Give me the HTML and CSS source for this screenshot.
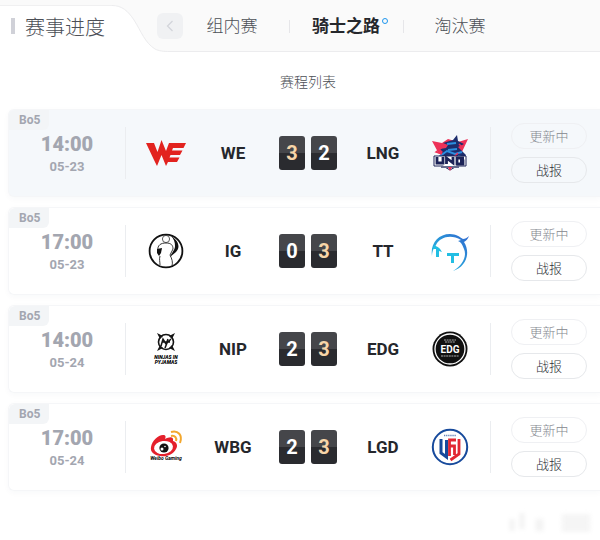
FILE: index.html
```html
<!DOCTYPE html>
<html lang="zh-CN">
<head>
    <meta charset="UTF-8">
    <meta name="viewport" content="width=device-width, initial-scale=1">
    <title>赛事进度</title>
    <link rel="stylesheet" href="styles.css">
</head>
<body>
    <header class="header">
        <h1 class="title">赛事进度</h1>
        <svg class="curve" viewBox="0 0 58 47" aria-hidden="true">
            <path d="M0 0.5C10 0.5 16 6 22 15C29 26 33 38 43 44C47 46 51 46.5 58 46.5V47H0Z" fill="#fff"/>
            <path d="M0 0.5C10 0.5 16 6 22 15C29 26 33 38 43 44C47 46 51 46.5 58 46.5" fill="none" stroke="#ececee"/>
        </svg>
        <button class="prev" type="button" aria-label="上一页">
            <svg width="8" height="12" viewBox="0 0 8 12"><path d="M6.5 1L1.5 6L6.5 11" fill="none" stroke="#d3d5da" stroke-width="1.3"/></svg>
        </button>
        <nav class="tabs">
            <a class="tab" href="#group">组内赛</a>
            <a class="tab active" href="#knight">骑士之路</a>
            <a class="tab" href="#knockout">淘汰赛</a>
        </nav>
    </header>

    <main>
        <h2 class="list-title">赛程列表</h2>

        <ul class="list">
            <li class="match current">
                <span class="bo">Bo5</span>
                <div class="date"><b>14:00</b><span>05-23</span></div>
                <div class="versus">
                    <!-- WE -->
                    <svg class="logo" viewBox="0 0 40 40">
                        <path fill="#e2231f" d="M0 10H8L11.500 19L15.500 7L20 18L23 10H40L37.500 15H27L26 17.500H36.500L34 22H24.500L23.500 24.500H33.500L31 29H22L20 33L15.500 22L11 33L8 27Z"/>
                    </svg>
                    <span class="team">WE</span>
                    <div class="score"><b class="win">3</b><b>2</b></div>
                    <span class="team">LNG</span>
                    <!-- LNG -->
                    <svg class="logo" viewBox="0 0 40 40">
                        <path fill="#ed3158" d="M2 8L12 10L18 6L28 9L38 6L31 21H9Z"/>
                        <path fill="#1d2d6c" d="M13 10L23 7L27 2L28 8L34 11L28 14L31 17L36 22L34 26H6L13 19L10 16L16 15L18 12Z"/>
                        <path fill="none" stroke="#2c8ee0" stroke-width="2" d="M17 11L26 10M18 17L27 16M10 23L17 18L25 21L32 19M28 23L34 25"/>
                        <path fill="none" stroke="#ed3158" stroke-width="1.5" d="M8 11L11 15L6 19L12 21M29 11L32 14M24 24L28 20"/>
                        <path fill="#fff" stroke="#1c2357" d="M4 23H36V33H27L20 37L13 33H4Z"/>
                        <path fill="none" stroke="#1c2357" stroke-width="2.8" d="M7 24V30H13V24M16.500 31V25L23 30V24M34 25H27V31H33V28H30"/>
                        <path d="M11 34H29" stroke="#656a8c" stroke-width="2"/>
                        <path d="M18 34L20 38L22 34Z" fill="#ed3158"/>
                    </svg>
                </div>
                <div class="actions"><button type="button" disabled>更新中</button><button type="button">战报</button></div>
            </li>

            <li class="match">
                <span class="bo">Bo5</span>
                <div class="date"><b>17:00</b><span>05-23</span></div>
                <div class="versus">
                    <!-- IG -->
                    <svg class="logo" viewBox="0 0 40 40">
                        <circle cx="20" cy="20" r="16.4" fill="#fff" stroke="#111" stroke-width="1.8"/>
                        <circle cx="20" cy="8" r="3.6" fill="none" stroke="#333" stroke-width="0.8"/>
                        <path d="M12 20C11 14 15 12 20 12C25 12 27 14 27 18L24 24C26 28 27 31 26 35M14 25C13 28 14 31 14 34" fill="none" stroke="#222" stroke-width="0.9"/>
                        <path d="M25 5C32 9 35 16 30 21L24 26C26 21 29 19 29 15C29 11 28 8 25 5Z" fill="#111"/>
                        <path d="M11 18L16 17L15 22L13 25L11 22Z" fill="#111"/>
                    </svg>
                    <span class="team">IG</span>
                    <div class="score"><b>0</b><b class="win">3</b></div>
                    <span class="team">TT</span>
                    <!-- TT -->
                    <svg class="logo" viewBox="0 0 40 40">
                        <defs>
                            <linearGradient id="tt" x1="0" y1="1" x2="1" y2="0">
                                <stop offset="0" stop-color="#20c9e5"/>
                                <stop offset="1" stop-color="#3267ce"/>
                            </linearGradient>
                        </defs>
                        <path fill="url(#tt)" d="M2 25C0 13 8 3 20 3C26 3 30 6 33 8C35 8 37 7 39 5C38 8 36 10 34 11C41 22 36 36 23 40C33 34 37 25 34 18C32 13 31 11 28 10L31 9C21 3 10 6 6 14C3 18 2 21 2 25Z"/>
                        <path fill="#22bee3" d="M4 14C8 16 10 17 12 21L9 20V26H6V18L3 18ZM17 22H29V25H24V32H21V25H17Z"/>
                    </svg>
                </div>
                <div class="actions"><button type="button" disabled>更新中</button><button type="button">战报</button></div>
            </li>

            <li class="match">
                <span class="bo">Bo5</span>
                <div class="date"><b>14:00</b><span>05-24</span></div>
                <div class="versus">
                    <!-- NIP -->
                    <svg class="logo" viewBox="0 0 40 40">
                        <circle cx="20" cy="13" r="7.5" fill="#fff" stroke="#151515" stroke-width="1.6"/>
                        <path d="M11 4L17 7L14 10ZM29 4L26 10L23 7ZM11 22L14 16L17 19ZM29 22L23 19L26 16Z" fill="#151515"/>
                        <path d="M15 17L17 10L20 15L22 10M19 19L21 14L25 10M16 13H24" fill="none" stroke="#151515" stroke-width="1.5"/>
                        <text class="nip-text" x="20" y="30" text-anchor="middle">NINJAS IN</text>
                        <text class="nip-text" x="20" y="35" text-anchor="middle">PYJAMAS</text>
                    </svg>
                    <span class="team">NIP</span>
                    <div class="score"><b>2</b><b class="win">3</b></div>
                    <span class="team">EDG</span>
                    <!-- EDG -->
                    <svg class="logo" viewBox="0 0 40 40">
                        <circle cx="20" cy="20" r="17.5" fill="#111"/>
                        <circle cx="20" cy="20" r="15" fill="none" stroke="#fff" stroke-width="1.3"/>
                        <path d="M14 11H26M15 13H25M11 27H29" stroke="#aaa" stroke-width="1" stroke-dasharray="2 0.6"/>
                        <text class="edg-text" x="20" y="24" text-anchor="middle">EDG</text>
                    </svg>
                </div>
                <div class="actions"><button type="button" disabled>更新中</button><button type="button">战报</button></div>
            </li>

            <li class="match">
                <span class="bo">Bo5</span>
                <div class="date"><b>17:00</b><span>05-24</span></div>
                <div class="versus">
                    <!-- WBG -->
                    <svg class="logo" viewBox="0 0 40 40">
                        <path fill="#e4202c" d="M5 20C6 14 12 8 17 8C20 8 20 10 19 12C23 10 28 9 27 14C31 15 32 19 30 22C27 28 20 30 14 29C8 28 4 25 5 20Z"/>
                        <ellipse cx="17.5" cy="20.5" rx="9.5" ry="6.5" fill="#fff" transform="rotate(-7 17.5 20.5)"/>
                        <circle cx="18" cy="21" r="4.6" fill="#111"/>
                        <circle cx="16" cy="22" r="1.5" fill="#fff"/>
                        <circle cx="19" cy="19.5" r="0.8" fill="#fff"/>
                        <path d="M25 9C29 8 31 11 30 14M25 5C32 3 37 8 34 16" fill="none" stroke="#f3a72d" stroke-width="2"/>
                        <text class="wbg-text" x="20" y="33" text-anchor="middle">Weibo Gaming</text>
                    </svg>
                    <span class="team">WBG</span>
                    <div class="score"><b>2</b><b class="win">3</b></div>
                    <span class="team">LGD</span>
                    <!-- LGD -->
                    <svg class="logo" viewBox="0 0 40 40">
                        <circle cx="20" cy="20" r="17.2" fill="#fff" stroke="#174a9c" stroke-width="2"/>
                        <path d="M14 8.5H26" stroke="#6583b8" stroke-width="1.3" stroke-dasharray="1.3 0.8"/>
                        <path d="M11 12V26L16.500 30V13" fill="none" stroke="#174a9c" stroke-width="3"/>
                        <path d="M29 12V27L20.500 33M26 13H19.500V29M19.500 19H24.500V28" fill="none" stroke="#e22632" stroke-width="2.8"/>
                    </svg>
                </div>
                <div class="actions"><button type="button" disabled>更新中</button><button type="button">战报</button></div>
            </li>
        </ul>
    </main>

    <footer class="footer">
        <svg width="88" height="24" viewBox="0 0 88 24" aria-hidden="true">
            <path d="M6 8V20M16 2V18M32 8V20M35 8V20M56 6H84M56 12H84M56 18H84" fill="none" stroke="#f3f3f3" stroke-width="5"/>
        </svg>
    </footer>
</body>
</html>
```
FILE: styles.css
```css
*, *::before, *::after {
    box-sizing: border-box;
}
body {
    margin: 0;
    background-color: #fff;
    color: #4c4f56;
    font-family: Roboto, "Noto Sans CJK SC", sans-serif;
    font-weight: 300;
    overflow-x: hidden;
}
h1, h2, ul {
    margin: 0;
    padding: 0;
    font-weight: 300;
}
button {
    font: inherit;
    padding: 0;
    cursor: pointer;
}

/* 顶部 */
.header {
    display: flex;
    align-items: center;
    height: 52px;
    background-color: #fafafa;
    border-bottom: 1px solid #ececee;
}
.title {
    display: flex;
    align-items: center;
    gap: 10px;
    align-self: flex-end;
    width: 112px;
    height: 47px;
    margin-bottom: -1px;
    padding: 0 0 6px 11px;
    background-color: #fff;
    border-top: 1px solid #f0f0f1;
    font-size: 20px;
    white-space: nowrap;
}
.title::before {
    content: "";
    width: 4px;
    height: 16px;
    background-color: #d0d1d8;
}
.curve {
    flex: none;
    align-self: flex-end;
    width: 58px;
    height: 47px;
    margin-bottom: -1px;
}
.prev {
    flex: none;
    display: flex;
    align-items: center;
    justify-content: center;
    width: 26px;
    height: 26px;
    margin-left: -13px;
    border: none;
    border-radius: 6px;
    background-color: #f0f1f3;
}
.tabs {
    display: flex;
    margin-left: -8px;
}
.tab {
    position: relative;
    width: 114px;
    font-size: 17px;
    line-height: 28px;
    text-align: center;
    color: #4c4f56;
    text-decoration: none;
}
.tab + .tab::before {
    content: "";
    position: absolute;
    left: 0;
    top: 8px;
    height: 13px;
    border-left: 1px solid #e6e6e9;
}
.tab.active {
    color: #25272c;
    font-weight: bold;
}
.tab.active::after {
    content: "";
    position: absolute;
    top: 6px;
    right: 15px;
    width: 6px;
    height: 6px;
    border: 1px solid #1e96ee;
    border-radius: 50%;
}

/* 赛程列表 */
.list-title {
    padding: 20px 0 17px;
    margin-left: 16px;
    font-size: 14px;
    line-height: 20px;
    text-align: center;
}
.list {
    display: flex;
    flex-direction: column;
    gap: 10px;
    padding-left: 8px;
    list-style: none;
}
.match {
    position: relative;
    display: flex;
    align-items: center;
    height: 88px;
    border: 1px solid #f5f6f8;
    border-right: none;
    border-radius: 6px 0 0 6px;
    box-shadow: 0 2px 6px rgba(40, 60, 90, 0.03);
}
.match.current {
    background-color: #f5f8fb;
}
.bo {
    position: absolute;
    left: 0;
    top: 0;
    padding: 0 9px 0 10px;
    border-radius: 6px 0 6px 0;
    background-color: #f3f5f7;
    color: #a3a6b0;
    font-size: 12px;
    font-weight: bold;
    line-height: 20px;
}
.date {
    display: flex;
    flex-direction: column;
    align-items: center;
    width: 116px;
    padding-top: 2px;
    color: #a3a6b0;
    font-size: 13px;
    font-weight: bold;
    line-height: 20px;
}
.date b {
    font-size: 20px;
    line-height: 26px;
}
.versus {
    flex: 1;
    display: grid;
    grid-template-columns: 80px 54px 1fr 54px 80px;
    align-items: center;
    justify-items: center;
    height: 52px;
    border: 1px solid #ebedf0;
    border-width: 0 1px;
}
.logo {
    width: 40px;
    height: 40px;
}
.team {
    color: #25272c;
    font-size: 17px;
    font-weight: bold;
}
.score {
    display: flex;
    gap: 6px;
}
.score b {
    width: 26px;
    border-radius: 3px;
    background: linear-gradient(#45464a 50%, #2a2b2f 50%);
    color: #fff;
    font-size: 20px;
    font-weight: bold;
    line-height: 34px;
    text-align: center;
}
.score .win {
    color: #f7d5a8;
}
.actions {
    display: flex;
    flex-direction: column;
    gap: 8px;
    width: 109px;
    padding: 0 13px 0 20px;
}
.actions button {
    height: 26px;
    padding-bottom: 2px;
    border: 1px solid #e6e8eb;
    border-radius: 13px;
    background-color: transparent;
    color: #2c2f36;
    font-size: 13px;
}
.actions button:disabled {
    border-color: #eff0f3;
    color: #85888f;
    cursor: default;
}

/* 队标里的文字 */
.nip-text {
    font-size: 5px;
    font-weight: 900;
    font-style: italic;
}
.edg-text {
    fill: #fff;
    font-size: 10px;
    font-weight: bold;
}
.wbg-text {
    font-size: 5px;
    font-weight: bold;
    font-style: italic;
}

.footer {
    display: flex;
    justify-content: flex-end;
    padding: 20px 6px 0 0;
}
.footer svg {
    filter: blur(2px);
}
```
